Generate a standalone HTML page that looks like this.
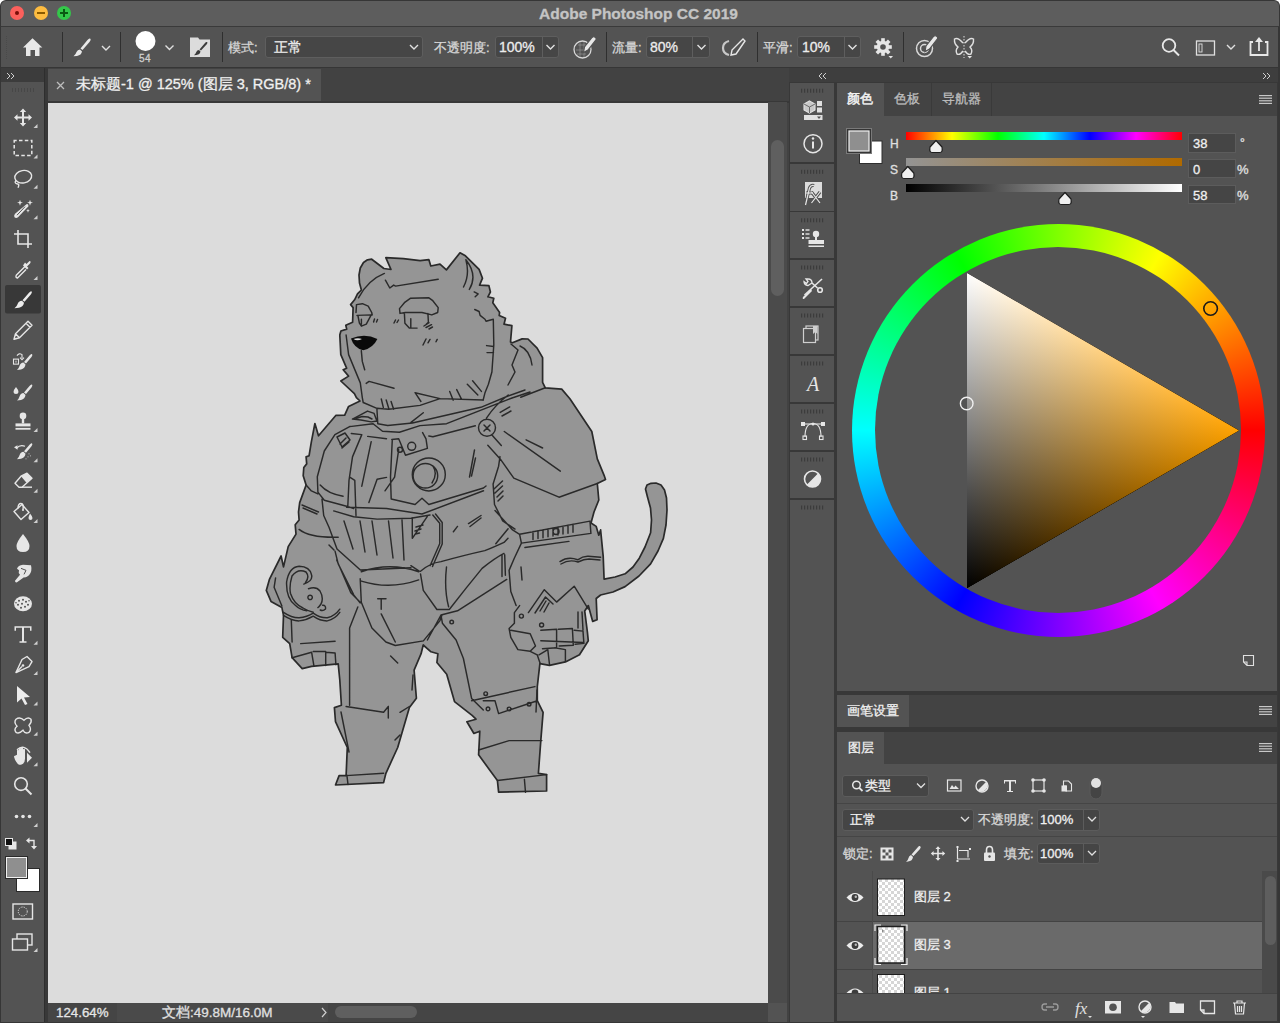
<!DOCTYPE html>
<html><head><meta charset="utf-8">
<style>
*{margin:0;padding:0;box-sizing:border-box}
html,body{width:1280px;height:1023px;overflow:hidden;background:#282828;font-family:"Liberation Sans",sans-serif;color:#e6e6e6}
.a{position:absolute}
.t{position:absolute;white-space:nowrap;line-height:1;-webkit-text-stroke:0.3px currentColor}
svg{position:absolute;overflow:visible}
</style></head><body>
<!-- title bar -->
<div class="a" style="left:0;top:0;width:1280px;height:27px;background:#ffffff"></div><div class="a" style="left:0;top:0;width:1280px;height:27px;background:#5d5d5d;border:1px solid #363636;border-bottom:1px solid #3a3a3a;border-radius:6px 6px 0 0"></div>
<div class="a" style="left:10px;top:6px;width:14px;height:14px;border-radius:50%;background:#fc605c"></div>
<div class="a" style="left:34px;top:6px;width:14px;height:14px;border-radius:50%;background:#fdbc40"></div>
<div class="a" style="left:57px;top:6px;width:14px;height:14px;border-radius:50%;background:#34c84a"></div>
<div class="t" style="left:0;width:1277px;text-align:center;top:6px;font-size:15.5px;font-weight:bold;color:#c4c4c4">Adobe Photoshop CC 2019</div>
<!-- options bar -->
<div class="a" style="left:0;top:27px;width:1280px;height:41px;background:#535353;border-bottom:1px solid #363636"></div>

<!-- traffic symbols -->
<div class="a" style="left:15px;top:11px;width:4px;height:4px;border-radius:50%;background:#7a0c08"></div>
<div class="a" style="left:37px;top:12px;width:8px;height:2px;background:#8a5a00"></div>
<div class="a" style="left:60px;top:12px;width:8px;height:2px;background:#0a5a12"></div>
<div class="a" style="left:63px;top:9px;width:2px;height:8px;background:#0a5a12"></div>
<!-- options bar content -->
<div class="a" style="left:6px;top:36px;width:2px;height:23px;border-left:1px dotted #4a4a4a"></div>
<svg style="left:0;top:0;z-index:2" width="1280" height="68">
 <g fill="#e8e8e8">
  <path d="M32.5 38.3 L42.3 47.5 L39.5 47.5 L39.5 56 L35 56 L35 50 L30.5 50 L30.5 56 L26 56 L26 47.5 L23 47.5 Z"/>
 </g>
 <g stroke="#2f2f2f" stroke-width="1"><line x1="62.5" y1="32" x2="62.5" y2="62"/><line x1="120.5" y1="32" x2="120.5" y2="62"/><line x1="222.5" y1="32" x2="222.5" y2="62"/><line x1="606.5" y1="32" x2="606.5" y2="62"/><line x1="757.5" y1="32" x2="757.5" y2="62"/><line x1="903.5" y1="32" x2="903.5" y2="62"/></g>
 <!-- brush -->
 <path d="M90 38.5 Q91.5 39.5 89.5 42 L82.5 50 L80.5 48.5 L87.5 40 Q89 38 90 38.5 Z M80 49.5 L82 51.5 Q81.5 55 77 56 L73.5 56.3 Q76 54 76.5 52 Q77.5 49.5 80 49.5 Z" fill="#e8e8e8"/>
 <g fill="none" stroke="#e0e0e0" stroke-width="1.4">
  <polyline points="102,46 106,50 110,46"/>
  <polyline points="165.5,45.5 169.5,49.5 173.5,45.5"/>
  <polyline points="410,45 414,49 418,45"/>
  <polyline points="546.5,45 550.5,49 554.5,45"/>
  <polyline points="697.5,45 701.5,49 705.5,45"/>
  <polyline points="848.5,45 852.5,49 856.5,45"/>
  <polyline points="1227,45 1231,49 1235,45"/>
 </g>
 <circle cx="145.5" cy="41" r="10" fill="#ffffff"/>
 <!-- brush panel toggle -->
 <path d="M190 37.5 L198 37.5 L199.5 39.5 L210 39.5 L210 57 L190 57 Z" fill="#dcdcdc"/>
 <path d="M207 42 Q208 42.5 207 44 L201 50.5 L199.5 49.5 L205 43 Q206 41.5 207 42 Z M199 50 L200.5 51.5 Q200 54.5 196.5 55 L194 55.2 Q196 53.5 196.3 52 Q197 50 199 50 Z" fill="#3c3c3c"/>
 <!-- pressure opacity icon -->
 <g fill="none" stroke="#d8d8d8" stroke-width="1.3">
  <circle cx="582.5" cy="49.5" r="8.5"/>
  <path d="M576 50 L588 50 M578 45 L587 45 M577 54 L586 54 M580 42 L580 57 M584 42 L584 57" stroke-width="0.6" stroke="#9a9a9a"/>
 </g>
 <path d="M583.5 52.5 L584.5 47 L592 37.5 Q593.5 36 595.5 37.5 Q597 39 595.5 40.5 L588 50 Z" fill="#e8e8e8" stroke="#535353" stroke-width="1.2"/>
 <!-- airbrush -->
 <path d="M729 41 Q723 42.5 723 48 Q723 53.5 729 55" fill="none" stroke="#c8c8c8" stroke-width="2.2"/>
 <path d="M743 39 L745 41 L736 54 L731 55 L732 50 Z" fill="none" stroke="#e6e6e6" stroke-width="1.4"/>
 <!-- gear -->
 <g transform="translate(883,47)">
  <circle r="6.2" fill="#e6e6e6"/>
  <g fill="#e6e6e6"><rect x="-1.8" y="-8.8" width="3.6" height="17.6"/><rect x="-1.8" y="-8.8" width="3.6" height="17.6" transform="rotate(45)"/><rect x="-1.8" y="-8.8" width="3.6" height="17.6" transform="rotate(90)"/><rect x="-1.8" y="-8.8" width="3.6" height="17.6" transform="rotate(135)"/></g>
  <circle r="2.8" fill="#535353"/>
 </g>
 <path d="M888.5 56 L893 56 L890.75 58.5 Z" fill="#e6e6e6"/>
 <!-- target pressure size -->
 <g fill="none" stroke="#d8d8d8" stroke-width="1.5">
  <circle cx="924.5" cy="48.5" r="8"/>
  <circle cx="924.5" cy="48.5" r="4"/>
 </g>
 <path d="M925 51.5 L926 46 L933.5 36.5 Q935 35 937 36.5 Q938.5 38 937 39.5 L929.5 49 Z" fill="#e8e8e8" stroke="#535353" stroke-width="1.2"/>
 <!-- butterfly -->
 <g fill="none" stroke="#e0e0e0" stroke-width="1.4">
  <path d="M963 43 Q958 37 954.5 39 Q954 44 958 47 Q955 50 957 54 Q960 55.5 963 51"/>
  <path d="M965 43 Q970 37 973.5 39 Q974 44 970 47 Q973 50 971 54 Q968 55.5 965 51"/>
 </g>
 <line x1="964" y1="36" x2="964" y2="58" stroke="#e0e0e0" stroke-width="1" stroke-dasharray="1.5 1.5"/>
 <path d="M967.5 56 L972 56 L969.75 58.5 Z" fill="#e6e6e6"/>
 <!-- search -->
 <circle cx="1169" cy="45.5" r="6.3" fill="none" stroke="#e8e8e8" stroke-width="1.8"/>
 <line x1="1173.5" y1="50" x2="1179" y2="55.5" stroke="#e8e8e8" stroke-width="2"/>
 <!-- workspace -->
 <rect x="1196.5" y="41" width="18" height="14" fill="none" stroke="#e0e0e0" stroke-width="1.3"/>
 <rect x="1199" y="44" width="3" height="8" fill="none" stroke="#e0e0e0" stroke-width="0.9"/>
 <!-- share -->
 <path d="M1253 42 L1250.5 42 L1250.5 55 L1267.5 55 L1267.5 42 L1265 42" fill="none" stroke="#e8e8e8" stroke-width="1.8"/>
 <path d="M1259 51 L1259 39" stroke="#e8e8e8" stroke-width="1.8"/>
 <path d="M1255 42 L1259 37 L1263 42 Z" fill="#e8e8e8"/>
</svg>
<div class="t" style="left:139px;top:54px;font-size:10px;color:#d0d0d0;letter-spacing:0.5px">54</div>
<div class="t" style="left:228px;top:41px;font-size:13px;color:#d6d6d6">模式:</div>
<div class="a" style="left:265px;top:36px;width:158px;height:22px;background:#464646;border:1px solid #5e5e5e;border-radius:3px"></div>
<div class="t" style="left:274px;top:40px;font-size:14px;color:#ececec">正常</div>
<div class="t" style="left:434px;top:41px;font-size:13px;color:#d6d6d6">不透明度:</div>
<div class="a" style="left:495px;top:36px;width:64px;height:22px;background:#464646;border:1px solid #5e5e5e;border-radius:3px"></div>
<div class="a" style="left:542px;top:37px;width:1px;height:20px;background:#5e5e5e"></div>
<div class="t" style="left:499px;top:40px;font-size:14px;color:#ececec">100%</div>
<div class="t" style="left:612px;top:41px;font-size:13px;color:#d6d6d6">流量:</div>
<div class="a" style="left:646px;top:36px;width:64px;height:22px;background:#464646;border:1px solid #5e5e5e;border-radius:3px"></div>
<div class="a" style="left:692px;top:37px;width:1px;height:20px;background:#5e5e5e"></div>
<div class="t" style="left:650px;top:40px;font-size:14px;color:#ececec">80%</div>
<div class="t" style="left:763px;top:41px;font-size:13px;color:#d6d6d6">平滑:</div>
<div class="a" style="left:797px;top:36px;width:64px;height:22px;background:#464646;border:1px solid #5e5e5e;border-radius:3px"></div>
<div class="a" style="left:844px;top:37px;width:1px;height:20px;background:#5e5e5e"></div>
<div class="t" style="left:802px;top:40px;font-size:14px;color:#ececec">10%</div>

<!-- strip -->
<div class="a" style="left:0;top:68px;width:1280px;height:14px;background:#3f3f3f"></div>
<!-- tools panel -->
<div class="a" style="left:0;top:68px;width:45px;height:955px;background:#535353;border-right:1px solid #2e2e2e"></div>
<div class="a" style="left:0;top:68px;width:44px;height:14px;background:#3c3c3c"></div>
<!-- tools -->
<svg style="left:0;top:0;z-index:2" width="45" height="1023">
<g fill="#474747"><rect x="12" y="88" width="1" height="4"/><rect x="15" y="88" width="1" height="4"/><rect x="18" y="88" width="1" height="4"/><rect x="21" y="88" width="1" height="4"/><rect x="24" y="88" width="1" height="4"/><rect x="27" y="88" width="1" height="4"/><rect x="30" y="88" width="1" height="4"/><rect x="33" y="88" width="1" height="4"/></g>
<rect x="5" y="285" width="36" height="28.5" rx="2" fill="#383838"/>
<g transform="translate(23,117.50)"><g fill="#e6e6e6"><path d="M0 -9 L3.2 -5.5 L1 -5.5 L1 -1 L5.5 -1 L5.5 -3.2 L9 0 L5.5 3.2 L5.5 1 L1 1 L1 5.5 L3.2 5.5 L0 9 L-3.2 5.5 L-1 5.5 L-1 1 L-5.5 1 L-5.5 3.2 L-9 0 L-5.5 -3.2 L-5.5 -1 L-1 -1 L-1 -5.5 L-3.2 -5.5 Z"/></g></g>
<path d="M37.5 124.00 L37.5 128.00 L33.5 128.00 Z" fill="#cfcfcf"/>
<g transform="translate(23,147.89)"><rect x="-8.8" y="-7.5" width="17.6" height="15" fill="none" stroke="#e6e6e6" stroke-width="1.5" stroke-dasharray="3.5 2.3" stroke-dashoffset="1"/></g>
<path d="M37.5 154.39 L37.5 158.39 L33.5 158.39 Z" fill="#cfcfcf"/>
<g transform="translate(23,178.28)"><g fill="none" stroke="#e6e6e6" stroke-width="1.4"><ellipse cx="0.5" cy="-1.5" rx="8.5" ry="6.2" transform="rotate(-10)"/><path d="M-7 2 Q-9 5 -6 5.5 Q-3 5.5 -5 9.5"/></g></g>
<path d="M37.5 184.78 L37.5 188.78 L33.5 188.78 Z" fill="#cfcfcf"/>
<g transform="translate(23,208.67)"><g fill="#e6e6e6"><path d="M3.5 -4.5 Q5.5 -5 5.5 -2.5 L-5 8.5 Q-7 10 -8.5 8.5 Q-9.5 7 -8 5 Z"/><path d="M-3 -9 L-2.2 -6.6 L0 -6 L-2.2 -5.4 L-3 -3 L-3.8 -5.4 L-6 -6 L-3.8 -6.6 Z"/><path d="M7 -9 L7.8 -6.6 L10 -6 L7.8 -5.4 L7 -3 L6.2 -5.4 L4 -6 L6.2 -6.6 Z"/><path d="M5 0 L5.6 1.6 L7 2 L5.6 2.4 L5 4 L4.4 2.4 L3 2 L4.4 1.6 Z"/></g><path d="M2 -2 L-6 6.5" stroke="#535353" stroke-width="1" fill="none"/></g>
<path d="M37.5 215.17 L37.5 219.17 L33.5 219.17 Z" fill="#cfcfcf"/>
<g transform="translate(23,239.06)"><g fill="none" stroke="#e6e6e6" stroke-width="1.6"><path d="M-5 -9 L-5 5 L9 5"/><path d="M-9 -5 L5 -5 L5 9"/></g></g>
<g transform="translate(23,269.45)"><g fill="none" stroke="#e6e6e6" stroke-width="1.4"><path d="M2 -3 L-6.5 5.5 Q-8 8 -5.5 8.5 L3 0"/></g><g fill="#e6e6e6"><path d="M0 -4 L4 0 L5.5 -1.5 L4 -3 L7 -6 Q8.5 -8.5 6.5 -8.5 L3.5 -5.5 L2 -7 Z"/></g></g>
<path d="M37.5 275.95 L37.5 279.95 L33.5 279.95 Z" fill="#cfcfcf"/>
<g transform="translate(23,299.84)"><g fill="#ececec"><path d="M8.5 -8.5 Q9.5 -7.5 8 -5.5 L1.5 2 L-0.5 0.5 L6 -7 Q7.5 -9 8.5 -8.5 Z"/><path d="M-1 1 L1 3 Q0.5 7 -4 8 L-8.5 8.5 Q-6 6.5 -5.5 4.5 Q-4.5 1 -1 1 Z"/></g></g>
<g transform="translate(23,330.23)"><g fill="none" stroke="#e6e6e6" stroke-width="1.4" stroke-linejoin="round"><path d="M5 -9 L9 -5 L-3.5 7.5 L-9 9 L-7.5 3.5 Z M3 -7 L7 -3 M-7.5 3.5 L-3.5 7.5"/></g></g>
<g transform="translate(23,360.62)"><g fill="#e6e6e6"><path d="M9 -6.5 Q10 -5.5 8.5 -3.5 L3 3 L1 1.5 L6.5 -5 Q8 -7 9 -6.5 Z"/><path d="M0.5 2 L2.5 4 Q2 8 -2 9 L-6 9.5 Q-4 7.5 -3.5 5.5 Q-2.5 2 0.5 2 Z"/></g><rect x="-9.5" y="-1.5" width="5" height="5" fill="none" stroke="#e6e6e6" stroke-width="1.1"/><rect x="-8" y="0" width="2" height="2" fill="#9a9a9a"/><path d="M-6 -5 Q-4 -8 -1 -6 L-1 -2.5" fill="none" stroke="#e6e6e6" stroke-width="1.1"/><path d="M-3 -3 L-1 -1 L1 -3" fill="none" stroke="#e6e6e6" stroke-width="1.1"/></g>
<g transform="translate(23,391.01)"><g fill="#e6e6e6"><path d="M9 -6.5 Q10 -5.5 8.5 -3.5 L3 3 L1 1.5 L6.5 -5 Q8 -7 9 -6.5 Z"/><path d="M0.5 2 L2.5 4 Q2 8 -2 9 L-6 9.5 Q-4 7.5 -3.5 5.5 Q-2.5 2 0.5 2 Z"/><path d="M-7 -4 Q-4.5 -1 -4.5 1 Q-4.5 3 -7 3 Q-9.5 3 -9.5 1 Q-9.5 -1 -7 -4 Z"/></g></g>
<g transform="translate(23,421.40)"><g fill="#e6e6e6"><circle cx="0" cy="-5.5" r="3.3"/><rect x="-1.2" y="-3" width="2.4" height="5"/><path d="M-7.5 2 L7.5 2 L7.5 5 L-7.5 5 Z"/><rect x="-7.5" y="6.5" width="15" height="1.8"/></g></g>
<path d="M37.5 427.90 L37.5 431.90 L33.5 431.90 Z" fill="#cfcfcf"/>
<g transform="translate(23,451.79)"><g fill="#e6e6e6"><path d="M9 -8.5 Q10 -7.5 8.5 -5.5 L3 1 L1 -0.5 L6.5 -7 Q8 -9 9 -8.5 Z"/><path d="M0.5 0 L2.5 2 Q2 6 -2 7 L-6 7.5 Q-4 5.5 -3.5 3.5 Q-2.5 0 0.5 0 Z"/></g><path d="M2 -5.5 Q-3 -7.5 -6.5 -3.5" fill="none" stroke="#e6e6e6" stroke-width="1.2"/><path d="M-9 -4.5 L-5.5 -6.5 L-5.5 -2 Z" fill="#e6e6e6"/><g fill="#bbbbbb"><circle cx="6" cy="2" r="0.6"/><circle cx="5" cy="5" r="0.6"/><circle cx="7.5" cy="4" r="0.6"/><circle cx="3" cy="7" r="0.6"/></g></g>
<path d="M37.5 458.29 L37.5 462.29 L33.5 462.29 Z" fill="#cfcfcf"/>
<g transform="translate(23,482.18)"><g fill="none" stroke="#e6e6e6" stroke-width="1.4" stroke-linejoin="round"><path d="M-2 -6 L4 -9 L9 -4 L-1 5 L-4 5 L-8 1 Z"/><path d="M-1 5 L9 5"/></g><path d="M-2 -6 L4 -9 L9 -4 L3.5 0.5 Z" fill="#e6e6e6"/></g>
<path d="M37.5 488.68 L37.5 492.68 L33.5 492.68 Z" fill="#cfcfcf"/>
<g transform="translate(23,512.57)"><g fill="none" stroke="#e6e6e6" stroke-width="1.4" stroke-linejoin="round"><path d="M-9 -1 L-1 -8 L6 0 L-2 7 Z"/><path d="M-5 -4 Q-5 -9 -2 -9 Q1 -9 0 -3"/></g><circle cx="0" cy="-2.5" r="1" fill="#e6e6e6"/><path d="M7 1 Q9.5 4 9.5 5.5 Q9.5 7.5 7.5 7.5 Q5.5 7.5 5.5 5.5 Q5.5 4 7 1 Z" fill="#e6e6e6"/></g>
<path d="M37.5 519.07 L37.5 523.07 L33.5 523.07 Z" fill="#cfcfcf"/>
<g transform="translate(23,542.96)"><path d="M0 -9 Q6.5 -1 6.5 3 Q6.5 9 0 9 Q-6.5 9 -6.5 3 Q-6.5 -1 0 -9 Z" fill="#e6e6e6"/></g>
<g transform="translate(23,573.35)"><path d="M8 -8 Q9.5 -2 6 2 Q3.5 4.5 1 4 L-6 9 Q-8 9.5 -8 7.5 L-3 1.5 Q-5 -0.5 -4 -3 L-6 -4.5 Q-5 -8 0 -8.5 Z" fill="#e6e6e6"/><path d="M-2 -5 L3 -3 L1 1" fill="none" stroke="#535353" stroke-width="1"/></g>
<g transform="translate(23,603.74)"><ellipse cx="0" cy="0" rx="9" ry="7.5" fill="#e6e6e6"/><g fill="#535353"><circle cx="-4" cy="-3" r="1"/><circle cx="0" cy="-4" r="1"/><circle cx="3" cy="-2" r="1"/><circle cx="-5" cy="1" r="1"/><circle cx="-1" cy="0" r="1"/><circle cx="5" cy="1" r="1"/><circle cx="-2" cy="4" r="1"/><circle cx="2" cy="3" r="1"/><circle cx="6" cy="-3" r="0.8"/><circle cx="-7" cy="-1" r="0.8"/></g></g>
<g transform="translate(23,634.13)"><g fill="#e6e6e6"><path d="M-8.5 -8 L8.5 -8 L8.5 -3.5 L7 -3.5 L7 -6.3 L1 -6.3 L1 7 L3.5 7 L3.5 8.5 L-3.5 8.5 L-3.5 7 L-1 7 L-1 -6.3 L-7 -6.3 L-7 -3.5 L-8.5 -3.5 Z"/></g></g>
<path d="M37.5 640.63 L37.5 644.63 L33.5 644.63 Z" fill="#cfcfcf"/>
<g transform="translate(23,664.52)"><g fill="none" stroke="#e6e6e6" stroke-width="1.4" stroke-linejoin="round"><path d="M4 -8 L9 -3 L6 2 L-7 8 L-1 -5 Z"/><path d="M-7 8 L-1 2"/></g><circle cx="0" cy="1" r="1.3" fill="#e6e6e6"/></g>
<path d="M37.5 671.02 L37.5 675.02 L33.5 675.02 Z" fill="#cfcfcf"/>
<g transform="translate(23,694.91)"><path d="M-6 -9 L7 2 L1 2.5 L4.5 9 L2 10 L-1.5 3.5 L-6 7.5 Z" fill="#ececec"/></g>
<path d="M37.5 701.41 L37.5 705.41 L33.5 705.41 Z" fill="#cfcfcf"/>
<g transform="translate(23,725.30)"><path d="M-7 -6 Q-3 -9 1 -5 Q5 -9 8 -6 Q9 -3 6 0 Q9 4 6 7 Q2 9 0 5 Q-4 9 -7 7 Q-9.5 4 -6 1 Q-9.5 -3 -7 -6 Z" fill="none" stroke="#e6e6e6" stroke-width="1.4"/></g>
<path d="M37.5 731.80 L37.5 735.80 L33.5 735.80 Z" fill="#cfcfcf"/>
<g transform="translate(23,755.69)"><g fill="#e6e6e6"><path d="M-6 -1 L-6 -5 Q-6 -6 -5 -6 Q-4 -6 -4 -5 L-4 -1 L-4 -7 Q-4 -8 -3 -8 Q-2 -8 -2 -7 L-2 -1 L-2 -7.5 Q-2 -8.5 -1 -8.5 Q0 -8.5 0 -7.5 L0 -1 L0 -6 Q0 -7 1 -7 Q2 -7 2 -6 L2 3 Q2 8 -2 9 L-4 9 Q-6 8 -8 4 L-9 1 Q-9 0 -8 0 Z"/><path d="M4 -3 L9 2 L4 7 Z"/></g><path d="M-6 -6 Q1 -12 7 -3" fill="none" stroke="#e6e6e6" stroke-width="1.4"/></g>
<path d="M37.5 762.19 L37.5 766.19 L33.5 766.19 Z" fill="#cfcfcf"/>
<g transform="translate(23,786.08)"><circle cx="-2" cy="-2" r="6.3" fill="none" stroke="#e6e6e6" stroke-width="1.6"/><line x1="2.5" y1="2.5" x2="8.5" y2="8.5" stroke="#e6e6e6" stroke-width="2"/></g>
<g transform="translate(23,816.47)"><g fill="#e6e6e6"><circle cx="-6.5" cy="0" r="1.8"/><circle cx="0" cy="0" r="1.8"/><circle cx="6.5" cy="0" r="1.8"/></g></g>
<path d="M37.5 822.97 L37.5 826.97 L33.5 826.97 Z" fill="#cfcfcf"/>
<rect x="9" y="842" width="7" height="7" fill="#e6e6e6" stroke="#e6e6e6" stroke-width="1"/><rect x="5.5" y="838.5" width="7" height="7" fill="#111" stroke="#e6e6e6" stroke-width="1"/>
<path d="M28.5 840.5 L34 840.5 L34 847" fill="none" stroke="#e6e6e6" stroke-width="1.4"/><path d="M29.5 837.5 L26 840.5 L29.5 843.5 Z M31 846 L34 849.5 L37 846 Z" fill="#e6e6e6"/>
<rect x="16.5" y="868.5" width="23" height="23" fill="#ffffff" stroke="#2a2a2a" stroke-width="1"/>
<rect x="5.5" y="856.5" width="22" height="22" fill="#8f8f8f" stroke="#2a2a2a" stroke-width="1"/><rect x="6.5" y="857.5" width="20" height="20" fill="none" stroke="#f0f0f0" stroke-width="1"/>
<rect x="13" y="904" width="19.5" height="15" fill="none" stroke="#e6e6e6" stroke-width="1.4"/><circle cx="22.75" cy="911.5" r="4.5" fill="none" stroke="#e6e6e6" stroke-width="1" stroke-dasharray="1.2 1.2"/>
<rect x="17" y="934" width="15" height="11" fill="#535353" stroke="#e6e6e6" stroke-width="1.4"/><rect x="12.5" y="939" width="15" height="11" fill="#535353" stroke="#e6e6e6" stroke-width="1.4"/><path d="M37.5 948 L37.5 952 L33.5 952 Z" fill="#cfcfcf"/>
</svg>
<!-- doc area -->
<div class="a" style="left:45px;top:68px;width:744px;height:955px;background:#424242"></div>
<div class="a" style="left:45px;top:68px;width:3px;height:955px;background:#383838"></div>
<div class="a" style="left:48px;top:69px;width:273px;height:32px;background:#535353"></div>
<svg style="left:0;top:0" width="100" height="100"><path d="M57 82 L64 89 M64 82 L57 89" stroke="#bdbdbd" stroke-width="1.3"/></svg>
<div class="t" style="left:76px;top:77px;font-size:14.5px;color:#f0f0f0">未标题-1 @ 125% (图层 3, RGB/8) *</div>
<div class="a" style="left:48px;top:101px;width:741px;height:1.5px;background:#383838"></div>
<div class="a" style="left:48px;top:102.5px;width:720px;height:900.5px;background:#dcdcdc"></div>
<div class="a" style="left:768px;top:102px;width:19px;height:901px;background:#4b4b4b"></div><div class="a" style="left:768px;top:1003px;width:19px;height:19px;background:#535353"></div>
<div class="a" style="left:771px;top:140px;width:13px;height:156px;border-radius:6.5px;background:#5f5f5f"></div>
<div class="a" style="left:48px;top:1003px;width:720px;height:20px;background:#454545"></div>
<div class="a" style="left:117px;top:1003px;width:211px;height:20px;background:#4a4a4a"></div>
<div class="t" style="left:56px;top:1006px;font-size:13.3px;color:#e6e6e6">124.64%</div>
<div class="t" style="left:162px;top:1006px;font-size:13.5px;color:#e0e0e0">文档:49.8M/16.0M</div>
<svg style="left:0;top:0" width="340" height="1023"><path d="M322 1008 L326 1012.5 L322 1017" fill="none" stroke="#d0d0d0" stroke-width="1.2"/></svg>
<div class="a" style="left:335px;top:1006px;width:82px;height:12px;border-radius:6px;background:#5f5f5f"></div>
<!-- CHAR -->
<svg style="left:0;top:0;z-index:1" width="768" height="1002"><path d="M361.4 290.0 L359.5 283.0 L359.0 275.0 L360.3 268.0 L363.5 262.5 L367.5 259.8 L371.7 259.2 L383.9 268.5 L391.0 269.5 L385.8 257.7 L403.4 258.7 L420.1 260.6 L428.9 259.7 L430.8 266.0 L440.0 264.1 L446.4 269.9 L460.0 252.8 L465.4 255.8 L479.1 269.4 L482.5 278.2 L479.6 285.1 L488.9 285.6 L490.4 292.0 L487.9 296.8 L493.8 298.3 L492.8 302.7 L499.6 312.5 L499.2 315.4 L505.5 318.3 L504.0 324.2 L511.9 325.7 L510.5 342.0 L512.4 342.8 L522.1 338.9 L528.0 339.0 L537.1 348.1 L542.6 357.7 L542.6 382.3 L545.3 387.8 L561.7 389.1 L569.9 398.7 L591.8 431.5 L597.3 458.9 L604.1 475.3 L605.5 479.4 L597.3 483.5 L598.8 500.0 L594.0 512.0 L591.0 523.0 L596.2 526.4 L598.8 535.2 L600.6 529.9 L603.2 556.3 L604.1 579.2 L615.0 577.0 L625.1 573.8 L633.0 567.0 L639.3 558.2 L645.0 547.0 L650.6 532.7 L651.5 520.0 L650.5 508.0 L647.5 497.0 L645.5 489.0 L647.0 485.0 L651.0 483.3 L656.0 483.0 L661.0 485.0 L664.5 490.0 L666.5 498.0 L667.0 510.0 L666.0 525.0 L663.4 538.4 L658.0 551.0 L650.6 563.9 L639.0 576.0 L625.1 586.6 L613.0 592.0 L600.6 595.0 L596.2 598.5 L597.1 619.7 L592.7 621.4 L588.3 605.6 L584.7 610.9 L587.4 632.0 L588.3 640.8 L579.5 654.8 L565.4 661.9 L549.5 665.4 L539.9 663.6 L537.3 686.6 L537.3 700.7 L543.1 712.4 L540.8 740.6 L538.4 773.4 L546.6 774.6 L546.6 791.0 L498.6 792.2 L497.4 780.5 L490.4 771.1 L478.6 754.7 L479.8 731.2 L473.9 733.5 L466.9 721.8 L476.0 719.2 L472.1 715.3 L454.5 701.6 L446.7 674.3 L436.9 662.5 L437.9 653.7 L431.0 651.8 L423.2 645.0 L421.1 653.7 L414.1 670.2 L416.4 698.3 L409.4 707.6 L397.7 747.5 L385.9 773.3 L383.6 782.6 L335.5 785.0 L339.1 775.6 L346.1 775.6 L347.3 747.5 L335.5 721.7 L334.4 707.6 L341.4 705.3 L339.8 680.0 L338.2 663.9 L311.6 666.3 L302.2 668.6 L292.1 657.7 L289.7 643.6 L282.7 637.3 L283.5 615.4 L281.9 607.6 L271.0 601.4 L266.3 590.4 L269.4 579.4 L281.1 556.0 L283.5 566.9 L288.2 546.6 L296.0 534.1 L295.2 524.7 L299.1 520.0 L298.5 512.0 L299.7 502.6 L306.1 485.1 L303.2 475.7 L303.8 467.5 L306.7 463.9 L306.1 456.9 L309.1 455.7 L311.4 441.7 L314.9 423.5 L318.5 435.8 L336.0 415.3 L344.7 415.2 L348.6 406.4 L360.0 401.0 L356.4 397.6 L354.4 393.7 L340.8 381.0 L348.6 376.1 L343.2 369.7 L346.6 368.2 L340.8 354.6 L339.8 335.0 L340.9 331.0 L346.7 329.1 L345.8 325.2 L352.6 322.2 L353.1 307.6 L350.6 304.6 L354.6 299.8 L357.5 293.9 L358.5 292.9 Z" fill="#959595" stroke="#2a2a2a" stroke-width="1.7" stroke-linejoin="round"/><path d="M358.5 297.8 Q368 280 384.4 273.4 M385.4 280.2 L389.8 288.0 L393.7 285.1 L395.6 286.1 L438.2 279.2 M465.9 259.7 Q470 275 463.5 287 M465.9 259.7 Q478 275 469.3 289.5 M474.2 291.9 L478.1 293.9 L475.2 296.8 M474.7 309.5 L479.1 311.5 L480.1 315.4 L485.0 319.3 L486.0 321.3 L493.3 319.3 L493.8 345.0 L491.9 372.0 L488.4 384.3 L484.9 393.1 L483.1 400.2 M486.6 345.6 L493.7 346.5 M487.0 352.6 L493.5 352.6 M356.0 312.5 L356.5 304.6 L362.4 303.7 L368.2 306.1 L371.7 312.5 L372.2 314.9 M357.0 315.4 L371.2 314.9 L366.3 324.2 L361.4 326.2 L359.4 323.2 L358.0 316.0 M361.4 319.3 L361.4 324.2 M373.6 322.0 L374.5 319.0 M376.5 322.0 L377.5 319.5 M394.0 323.0 L395.5 320.0 M397.0 322.5 L398.5 320.0 M400.0 313.4 L399.5 308.6 L404.4 302.7 L410.3 298.3 L428.9 297.8 L432.8 300.7 L438.2 307.6 L437.7 312.5 L431.8 314.9 L422.0 312.5 L405.4 312.5 L400.0 313.4 M404.4 313.4 L404.9 323.2 L409.3 328.1 L417.1 328.1 M410.8 318.8 L410.8 328.1 M427.9 313.4 L428.4 322.2 L426.5 324.0 M424.0 326.0 L429.0 322.7 M426.0 327.5 L431.5 324.7 M429.0 329.0 L432.5 327.0 M423.0 345.0 L426.0 339.0 M428.0 342.8 L430.0 339.4 M436.0 341.8 L437.2 339.4 M361.3 350.6 L362.3 361.4 L364.7 369.7 M346.1 335.0 L348.6 354.6 L360.3 382.9 L362.3 397.6 L363.2 402.5 M366.2 383.4 L369.1 381.4 L394.0 388.3 M363.2 402.5 L376.9 408.3 L388.7 409.3 L420.0 405.4 L440.0 398.6 L483.0 400.0 M415.1 392.7 L440.0 398.6 M415.1 392.7 L420.9 401.5 M381.3 399.0 L383.3 407.4 M386.2 400.0 L388.7 408.3 M391.1 401.5 L393.6 409.3 M449.7 391.4 L453.2 400.2 M456.7 389.6 L461.1 398.4 M467.3 384.3 L477.8 394.9 M472.6 380.8 L481.4 391.4 M511.0 344.0 L518.0 350.0 L512.0 365.0 L515.0 372.0 L508.0 385.0 M520 346 Q530 350 532 365 M376.9 408.7 L377.8 423.7 L387.7 425.5 L412.4 423.0 L480.8 407.3 L508.0 396.0 L525.0 390.0 M349.7 426.6 L373.1 423.7 L382.5 431.2 L399.4 432.2 L420.0 425.6 L446.6 423.7 L512.0 398.0 L530.0 392.0 M411.0 422.4 L423.3 412.8 M352.5 419.1 L367.5 411.1 L374.1 413.4 L376.9 421.0 L371.2 421.9 L360.9 420.0 L352.5 419.1 M356.0 418.5 L362.0 416.5 L368.0 417.0 L372.0 419.0 M350.1 426.4 L334.9 434.6 L324.3 451.0 L317.3 476.8 L317.9 492.1 L324.3 500.3 L346.6 506.2 L353.6 508.5 M306.1 485.1 L311.4 490.9 L317.9 493.9 M320.2 485.1 Q328 494 343.1 496.2 M351.3 433.5 L361.8 434.6 L352.5 456.9 L349.0 480.4 L347.8 506.2 M371.2 441.7 L361.8 486.2 M367.7 436.4 L386.5 438.7 M337.0 437.0 L345.0 433.0 L350.0 440.0 L342.0 447.0 L337.0 437.0 M340.0 444.0 L346.0 438.0 M342.0 448.0 L349.0 442.0 M392.3 439.5 L390.5 477.1 L391.2 499.0 L415.1 504.5 L422.0 498.3 L428.8 504.5 L483.5 488.0 L486.0 486.0 M391.8 439.5 L398.7 438.8 L405.5 455.2 L427.4 448.4 L426.0 438.8 L422.6 432.6 M428.8 436.0 L432.9 436.7 L475.3 425.8 M398.7 449.7 L394.6 477.1 L385.0 490.8 M350.1 477.4 L354.8 480.4 L356.0 515.5 M368.9 502.6 L377.1 479.2 L386.5 477.4 M346.6 507.3 L386.5 508.5 L422.0 514.0 L483.5 490.8 M333.7 510.9 L353.6 516.7 L377.1 519.1 L411.0 518.2 L430.0 515.0 M402.5 449.7 A2.5 2.5 0 1 1 397.5 449.7 A2.5 2.5 0 1 1 402.5 449.7 M415.7 446.3 A4 4 0 1 1 407.7 446.3 A4 4 0 1 1 415.7 446.3 M445.3 474.4 A16.5 16.5 0 1 1 412.3 474.4 A16.5 16.5 0 1 1 445.3 474.4 M437.7 475.7 A12.3 12.3 0 1 1 413.1 475.7 A12.3 12.3 0 1 1 437.7 475.7 M433 466 Q438 474 432 483 M495.5 427.8 A8.5 8.5 0 1 1 478.5 427.8 A8.5 8.5 0 1 1 495.5 427.8 M484.0 425.0 L490.0 431.0 M490.0 425.0 L484.0 431.0 M486.3 418.3 Q495 405 508.2 395 M491.7 434.7 L501.3 445.6 M487.8 445.2 L500.2 458.9 L513.8 478.1 L559.0 497.2 L597.3 483.5 M504.3 431.5 L560.3 471.2 M526.1 439.8 L542.6 448.0 M500.2 412.4 L509.7 406.9 M502.0 416.0 L511.0 411.0 M520.7 397.3 L545.3 387.8 M500.0 456.6 L498.6 466.2 L493.1 484.0 L494.5 504.5 L502.7 520.9 L515.0 529.1 M494.0 489.0 L502.5 481.0 M495.0 493.0 L502.5 486.0 M497.0 497.0 L503.0 491.0 M498.0 501.0 L503.0 496.0 M469.5 477.0 L474.5 450.0 M471.5 476.0 L475.5 458.0 M468.5 523.6 L481.0 515.5 M470.0 526.5 L481.0 518.0 M453.4 531.8 L457.5 526.4 M302.0 505.0 L318.5 512.0 M303.0 508.0 L317.0 514.0 M322.0 499.1 L323.7 515.5 L329.0 527.3 L337.0 549.0 L360.4 570.0 M344.0 521.0 L353.0 549.0 M360.0 521.0 L365.0 552.0 M372.0 521.0 L377.0 555.0 M388.5 521.0 L393.0 558.0 M402.0 520.0 L404.0 560.0 M360.4 570.0 L411.0 567.7 M412.3 518.0 L412.3 538.3 L427.4 516.4 M415.0 531.0 L421.0 529.0 M415.5 534.0 L419.5 533.0 M416.0 527.0 L423.0 525.0 M432.8 515.0 L439.7 523.3 L439.7 543.8 L430.1 565.7 M435.5 514.0 L442.2 522.5 L442.2 544.0 L432.5 566.5 M420.5 571.2 Q430 563 441 561.6 Q465 555 484.8 550.6 Q497 546 504 542.4 L508 538.3 M410.9 565.7 L419.2 571.2 M420.5 573.9 L423.3 590.3 L436.9 609.5 L449.3 609.5 M449.3 609.5 Q466 588 482.1 568.4 Q495 558 504 553.4 M441.0 615.0 L457.5 610.8 L506.7 579.4 M446.5 567 Q444 589 448.6 606.7 M441.0 615.0 L442.4 623.2 L447.9 630.0 L456.1 640.0 L463.4 658.5 L471.6 698.4 L483.3 710.1 M441.0 615.0 L427.4 640.0 M502.0 554.7 L502.0 576.6 M504.7 554.7 L505.4 575.3 M495.8 543.8 L508.1 528.7 M471.6 700.7 L534.9 686.6 M483.3 700.7 L495.0 700.7 L498.6 713.6 L537.3 700.7 M453.5 622.1 A1.8 1.8 0 1 1 449.9 622.1 A1.8 1.8 0 1 1 453.5 622.1 M487.5 693.7 A1.8 1.8 0 1 1 483.9 693.7 A1.8 1.8 0 1 1 487.5 693.7 M489.8 708.9 A1.8 1.8 0 1 1 486.2 708.9 A1.8 1.8 0 1 1 489.8 708.9 M510.9 708.9 A1.8 1.8 0 1 1 507.3 708.9 A1.8 1.8 0 1 1 510.9 708.9 M530.9 704.2 A1.8 1.8 0 1 1 527.3 704.2 A1.8 1.8 0 1 1 530.9 704.2 M478.6 750.0 L509.1 740.6 L541.9 740.6 M497.4 780.5 L546.6 774.6 M524.4 779.3 L525.5 792.2 M537.0 690.0 L536.0 712.0 M361.3 571.7 Q390 562 418.7 571.7 M361.3 581.1 Q390 590 418.7 579.9 M360.2 578.8 L361.3 602.2 L371.9 628.0 L385.9 642.0 L395.3 645.5 L423.4 640.9 L439.8 620.9 L442.0 615.0 M381.2 613.9 L395.3 642.0 M377.7 598.7 L386.0 598.7 M381.2 598.7 L381.2 609.2 M336.7 560.0 L350.8 592.8 L360.2 602.2 M390.6 656.0 L397.7 663.0 M357.8 606.9 L349.6 628.0 L349.6 705.3 M346.1 706.5 L383.6 712.3 L388.3 706.5 M388.3 706.5 L388.3 718.0 M400.0 712.3 L409.4 706.5 M346.1 775.6 L383.6 773.3 M346.9 775.2 L348.0 784.5 M341.0 712.0 L349.0 752.0 M413.0 675.0 L412.0 690.0 M395.0 740.0 L400.0 735.0 M299.1 529.4 Q310 538 338.2 537.2 M275.6 577.9 L274.1 587.3 L281.9 606.0 M303.8 584.1 Q313 581 311.6 575 Q310 566.5 299.1 566.2 Q289 567 286.6 582 Q286 598 295 605 Q300 610 306.9 610.7 M305.4 582.6 Q310 577 306 572 Q298 568 292 576 Q289 586 290.5 593.5 Q294 604 303 608 Q308 611 313.2 612.3 M308.5 588.8 Q316 586 320 591 Q324 598 321 604 Q319 607 317.9 607.6 M312.3 597.4 A2.2 2.2 0 1 1 307.9 597.4 A2.2 2.2 0 1 1 312.3 597.4 M322.6 605.3 Q326 605 325.5 609 Q323 611.5 320.2 610 M283.5 612.3 Q292 618 299.1 617.8 Q307 617 313.2 613.1 Q320 618 327.3 617.8 Q335 616 339.8 609.2 M283.5 615.4 Q292 621 299.1 620.9 Q307 620 313.2 616.2 Q320 621 327.3 620.9 Q335 619 339.8 612.3 M291.3 620.1 L292.1 642.0 M300.7 643.6 L335.1 641.2 M292.1 657.7 L311.6 652.2 L314.0 666.3 M313.2 651.4 L325.7 651.4 L325.7 665.5 M325.7 652.2 L335.1 653.0 L335.9 664.7 M335.1 551.3 L338.2 563.8 L353.9 595.1 L360.1 602.9 M329.0 545.0 L334.0 550.0 M519.6 534.3 L590.0 521.1 L590.9 533.4 L521.4 543.1 L519.6 534.3 M533.0 531.5 L533.0 539.5 M538.0 530.6 L538.0 538.6 M543.0 529.7 L543.0 537.7 M548.0 528.8 L548.0 536.8 M553.0 527.9 L553.0 535.9 M558.0 527.0 L558.0 535.0 M563.0 526.1 L563.0 534.1 M568.0 525.2 L568.0 533.2 M573.0 524.3 L573.0 532.3 M559.0 531.5 A3 3 0 1 1 553.0 531.5 A3 3 0 1 1 559.0 531.5 M495.0 510.6 L512.6 529.9 L519.6 534.3 M521.4 543.1 L514.4 558.0 L509.1 570.4 L510.8 591.5 L516.1 605.6 M524.9 547.5 L568.9 541.4 M521.0 567.0 L522.0 580.0 M560 561.6 Q568 556 577.7 559.8 Q583 556 588.3 556.3 L600.6 557.2 M561 564 Q569 559 578 562 Q584 559 589 559 L600 560 M528.4 612.6 L544.3 589.7 L556.6 602.1 L574.2 586.2 L588.3 609.1 M535.0 613.0 L545.5 597.0 L553.0 604.0 M540.0 611.0 L546.0 601.0 M544.0 612.0 L549.0 603.0 M519.6 605.6 L514.4 612.6 L514.4 623.2 L509.1 628.5 L510.8 637.3 L517.9 649.6 L530.2 651.3 L537.2 654.8 M510.8 630.2 L530.2 633.7 L535.5 646.0 L530.2 651.3 M540.8 630.2 L556.6 629.3 L556.6 647.8 L542.5 648.7 M558.3 629.3 L572.4 628.5 L573.3 645.2 L559.2 646.0 M574.2 630.2 L583.0 631.1 L583.9 643.4 L575.1 644.3 M540.8 640.8 L583.0 642.5 M539.0 654.8 L547.8 649.6 L549.5 664.5 M554.8 647.8 L565.4 649.6 L565.4 661.0 M523.4 616.1 A2 2 0 1 1 519.4 616.1 A2 2 0 1 1 523.4 616.1 M543.6 624.9 A2 2 0 1 1 539.6 624.9 A2 2 0 1 1 543.6 624.9 M578.0 612.0 L578.0 628.0 M582.0 612.0 L583.0 630.0 M537.2 654.8 L540.0 663.0" fill="none" stroke="#2a2a2a" stroke-width="1.45" stroke-linecap="round" stroke-linejoin="round"/><path d="M351 338.4 Q365 333 377.4 338.9 Q373 348 363.2 350.2 Q354 348 351 338.4 Z" fill="#0a0a0a"/><path d="M353.5 339 Q358 337.5 362 339 Q357 341.5 353.5 339 Z" fill="#d8d8d8"/></svg>
<!-- /CHAR -->
<!-- icon column -->
<div class="a" style="left:789px;top:68px;width:491px;height:14px;background:#3e3e3e"></div>
<div class="a" style="left:789px;top:82px;width:48px;height:941px;background:#383838"></div>
<div class="a" style="left:790px;top:82.7px;width:43.6px;height:79.3px;background:#535353"></div>
<div class="a" style="left:790px;top:163.8px;width:43.6px;height:47.0px;background:#535353"></div>
<div class="a" style="left:790px;top:212.3px;width:43.6px;height:45.69999999999999px;background:#535353"></div>
<div class="a" style="left:790px;top:259.5px;width:43.6px;height:46.5px;background:#535353"></div>
<div class="a" style="left:790px;top:307.5px;width:43.6px;height:46.5px;background:#535353"></div>
<div class="a" style="left:790px;top:355.5px;width:43.6px;height:46.5px;background:#535353"></div>
<div class="a" style="left:790px;top:403.5px;width:43.6px;height:46.5px;background:#535353"></div>
<div class="a" style="left:790px;top:451.5px;width:43.6px;height:46.5px;background:#535353"></div>
<div class="a" style="left:790px;top:499.5px;width:43.6px;height:523.5px;background:#535353"></div>
<svg style="left:0;top:0;z-index:2" width="1280" height="1023">
<path d="M822 73 L819 76 L822 79 M826 73 L823 76 L826 79" fill="none" stroke="#cfcfcf" stroke-width="1"/>
<path d="M1263 73 L1266 76 L1263 79 M1267 73 L1270 76 L1267 79" fill="none" stroke="#cfcfcf" stroke-width="1"/>
<path d="M7 73 L10 76 L7 79 M11 73 L14 76 L11 79" fill="none" stroke="#cfcfcf" stroke-width="1"/>
<g fill="#3c3c3c"><rect x="801" y="88.7" width="1.2" height="4"/><rect x="804" y="88.7" width="1.2" height="4"/><rect x="807" y="88.7" width="1.2" height="4"/><rect x="810" y="88.7" width="1.2" height="4"/><rect x="813" y="88.7" width="1.2" height="4"/><rect x="816" y="88.7" width="1.2" height="4"/><rect x="819" y="88.7" width="1.2" height="4"/><rect x="822" y="88.7" width="1.2" height="4"/></g>
<g fill="#3c3c3c"><rect x="801" y="169.8" width="1.2" height="4"/><rect x="804" y="169.8" width="1.2" height="4"/><rect x="807" y="169.8" width="1.2" height="4"/><rect x="810" y="169.8" width="1.2" height="4"/><rect x="813" y="169.8" width="1.2" height="4"/><rect x="816" y="169.8" width="1.2" height="4"/><rect x="819" y="169.8" width="1.2" height="4"/><rect x="822" y="169.8" width="1.2" height="4"/></g>
<g fill="#3c3c3c"><rect x="801" y="218.3" width="1.2" height="4"/><rect x="804" y="218.3" width="1.2" height="4"/><rect x="807" y="218.3" width="1.2" height="4"/><rect x="810" y="218.3" width="1.2" height="4"/><rect x="813" y="218.3" width="1.2" height="4"/><rect x="816" y="218.3" width="1.2" height="4"/><rect x="819" y="218.3" width="1.2" height="4"/><rect x="822" y="218.3" width="1.2" height="4"/></g>
<g fill="#3c3c3c"><rect x="801" y="265.5" width="1.2" height="4"/><rect x="804" y="265.5" width="1.2" height="4"/><rect x="807" y="265.5" width="1.2" height="4"/><rect x="810" y="265.5" width="1.2" height="4"/><rect x="813" y="265.5" width="1.2" height="4"/><rect x="816" y="265.5" width="1.2" height="4"/><rect x="819" y="265.5" width="1.2" height="4"/><rect x="822" y="265.5" width="1.2" height="4"/></g>
<g fill="#3c3c3c"><rect x="801" y="313.5" width="1.2" height="4"/><rect x="804" y="313.5" width="1.2" height="4"/><rect x="807" y="313.5" width="1.2" height="4"/><rect x="810" y="313.5" width="1.2" height="4"/><rect x="813" y="313.5" width="1.2" height="4"/><rect x="816" y="313.5" width="1.2" height="4"/><rect x="819" y="313.5" width="1.2" height="4"/><rect x="822" y="313.5" width="1.2" height="4"/></g>
<g fill="#3c3c3c"><rect x="801" y="361.5" width="1.2" height="4"/><rect x="804" y="361.5" width="1.2" height="4"/><rect x="807" y="361.5" width="1.2" height="4"/><rect x="810" y="361.5" width="1.2" height="4"/><rect x="813" y="361.5" width="1.2" height="4"/><rect x="816" y="361.5" width="1.2" height="4"/><rect x="819" y="361.5" width="1.2" height="4"/><rect x="822" y="361.5" width="1.2" height="4"/></g>
<g fill="#3c3c3c"><rect x="801" y="409.5" width="1.2" height="4"/><rect x="804" y="409.5" width="1.2" height="4"/><rect x="807" y="409.5" width="1.2" height="4"/><rect x="810" y="409.5" width="1.2" height="4"/><rect x="813" y="409.5" width="1.2" height="4"/><rect x="816" y="409.5" width="1.2" height="4"/><rect x="819" y="409.5" width="1.2" height="4"/><rect x="822" y="409.5" width="1.2" height="4"/></g>
<g fill="#3c3c3c"><rect x="801" y="457.5" width="1.2" height="4"/><rect x="804" y="457.5" width="1.2" height="4"/><rect x="807" y="457.5" width="1.2" height="4"/><rect x="810" y="457.5" width="1.2" height="4"/><rect x="813" y="457.5" width="1.2" height="4"/><rect x="816" y="457.5" width="1.2" height="4"/><rect x="819" y="457.5" width="1.2" height="4"/><rect x="822" y="457.5" width="1.2" height="4"/></g>
<g fill="#3c3c3c"><rect x="801" y="505.5" width="1.2" height="4"/><rect x="804" y="505.5" width="1.2" height="4"/><rect x="807" y="505.5" width="1.2" height="4"/><rect x="810" y="505.5" width="1.2" height="4"/><rect x="813" y="505.5" width="1.2" height="4"/><rect x="816" y="505.5" width="1.2" height="4"/><rect x="819" y="505.5" width="1.2" height="4"/><rect x="822" y="505.5" width="1.2" height="4"/></g>
<g stroke="#e0e0e0" stroke-width="1.1" fill="#c8c8c8"><path d="M809.5 101 L815 104 L815 110 L809.5 113 L804 110 L804 104 Z"/></g>
<path d="M804 104 L809.5 107 L815 104 M809.5 107 L809.5 113" fill="none" stroke="#6a6a6a" stroke-width="1"/>
<g fill="#e0e0e0"><rect x="817" y="101" width="5" height="5"/><rect x="817" y="107.5" width="5" height="5"/><rect x="804" y="115" width="18.5" height="5"/></g>
<path d="M817 116.5 L821 116.5 L819 119 Z" fill="#535353"/>
<circle cx="813" cy="143.7" r="9" fill="none" stroke="#e6e6e6" stroke-width="1.5"/><rect x="812" y="141.5" width="2" height="7" fill="#e6e6e6"/><circle cx="813" cy="138.5" r="1.2" fill="#e6e6e6"/>
<rect x="805" y="182" width="17" height="16" fill="#dcdcdc"/><path d="M814 185.5 Q811 184.5 809.5 188 L805.5 205" fill="none" stroke="#535353" stroke-width="3.2"/><path d="M806 193 L813 193" stroke="#535353" stroke-width="3"/><path d="M811.5 192 L820 203 M820 192 L811.5 203" stroke="#535353" stroke-width="3.2"/><path d="M814 185.5 Q811 184.5 809.5 188 L805.5 205" fill="none" stroke="#e6e6e6" stroke-width="1.2"/><path d="M806 193 L813 193" stroke="#e6e6e6" stroke-width="1.2"/><path d="M811.5 192 L820 203 M820 192 L811.5 203" stroke="#e6e6e6" stroke-width="1.2"/>
<g fill="#e6e6e6"><rect x="802" y="229" width="2" height="2"/><rect x="802" y="233" width="2" height="2"/><rect x="802" y="237" width="2" height="2"/><rect x="805.5" y="229.3" width="4" height="1.4"/><rect x="805.5" y="233.3" width="4" height="1.4"/><rect x="805.5" y="237.3" width="4" height="1.4"/>
<circle cx="816" cy="234" r="3.2"/><rect x="815" y="236" width="2" height="4"/><path d="M808.5 240 L824 240 L824 244 L808.5 244 Z"/><rect x="808.5" y="245.5" width="15.5" height="1.5"/></g>
<g stroke="#e6e6e6" fill="none" stroke-width="1.6"><path d="M822 279 L804.5 295"/><circle cx="820" cy="290" r="2.3"/><path d="M817.5 288 L812 283"/><path d="M812 283 Q812 279 808 279 L806 279 L808 281.5 L806.5 283.5 L804 281.5 Q804 285 808 285.5 Z" stroke-width="1.3"/></g><path d="M811 289 L803 297 Q802 299 804 299 L812 291 Z" fill="#e6e6e6"/>
<rect x="806" y="326" width="12" height="14" fill="none" stroke="#cfcfcf" stroke-width="1.2"/><rect x="803.5" y="328.5" width="12" height="14" fill="#535353" stroke="#cfcfcf" stroke-width="1.2"/><path d="M813 326 L817.5 326 L817.5 334 L815.25 332 L813 334 Z" fill="#cfcfcf"/>
<text x="813" y="391" text-anchor="middle" font-family="Liberation Serif" font-style="italic" font-size="20" fill="#e6e6e6">A</text>
<g fill="none" stroke="#e6e6e6" stroke-width="1.1"><path d="M805 437 Q805 423.5 813 423.5 Q821 423.5 821 437"/><path d="M803 424 L823 424"/><rect x="803" y="436" width="3.5" height="3.5"/><rect x="819.5" y="436" width="3.5" height="3.5"/></g><g fill="#e6e6e6"><rect x="801" y="422" width="4" height="4"/><rect x="821" y="422" width="4" height="4"/><circle cx="813" cy="424" r="1.5"/></g>
<circle cx="812.5" cy="479" r="8" fill="#535353" stroke="#e6e6e6" stroke-width="1.6"/><path d="M818.2 473.3 A8 8 0 0 1 806.8 484.7 Z" fill="#e6e6e6"/>
</svg>
<!-- right panels -->

<div class="a" style="left:836.8px;top:82px;width:443.2px;height:941px;background:#383838"></div>
<!-- color panel -->
<div class="a" style="left:837px;top:82.7px;width:440px;height:608.3px;background:#535353"></div>
<div class="a" style="left:884px;top:82.7px;width:393px;height:33.3px;background:#434343"></div>
<div class="a" style="left:930.5px;top:82.7px;width:1px;height:33.3px;background:#3a3a3a"></div>
<div class="a" style="left:990.5px;top:82.7px;width:1px;height:33.3px;background:#3a3a3a"></div>
<div class="t" style="left:847px;top:92px;font-size:13px;color:#f4f4f4;-webkit-text-stroke:0.45px #f4f4f4">颜色</div>
<div class="t" style="left:894px;top:92px;font-size:13px;color:#bdbdbd">色板</div>
<div class="t" style="left:942px;top:92px;font-size:13px;color:#bdbdbd">导航器</div>
<svg style="left:0;top:0;z-index:2" width="1280" height="1023">
 <g fill="#c8c8c8"><rect x="1259" y="95" width="13" height="1.2"/><rect x="1259" y="97.6" width="13" height="1.2"/><rect x="1259" y="100.2" width="13" height="1.2"/><rect x="1259" y="102.8" width="13" height="1.2"/></g>
 <g fill="#c8c8c8"><rect x="1259" y="706" width="13" height="1.2"/><rect x="1259" y="708.6" width="13" height="1.2"/><rect x="1259" y="711.2" width="13" height="1.2"/><rect x="1259" y="713.8" width="13" height="1.2"/></g>
 <g fill="#c8c8c8"><rect x="1259" y="743" width="13" height="1.2"/><rect x="1259" y="745.6" width="13" height="1.2"/><rect x="1259" y="748.2" width="13" height="1.2"/><rect x="1259" y="750.8" width="13" height="1.2"/></g>
 <!-- swatches -->
 <rect x="859.5" y="141" width="22.5" height="22.5" fill="#ffffff" stroke="#2e2e2e" stroke-width="1"/>
 <rect x="846.5" y="128.5" width="25" height="25" fill="#353535" stroke="#7a7a7a" stroke-width="1"/>
 <rect x="849" y="131" width="20" height="20" fill="#8f8f8f" stroke="#f0f0f0" stroke-width="1.2"/>
 <defs>
  <linearGradient id="hg" x1="0" x2="1" y1="0" y2="0">
   <stop offset="0" stop-color="#ff0000"/><stop offset="0.1667" stop-color="#ffff00"/><stop offset="0.3333" stop-color="#00ff00"/><stop offset="0.5" stop-color="#00ffff"/><stop offset="0.6667" stop-color="#0000ff"/><stop offset="0.8333" stop-color="#ff00ff"/><stop offset="1" stop-color="#ff0000"/>
  </linearGradient>
  <linearGradient id="sg" x1="0" x2="1"><stop offset="0" stop-color="#949494"/><stop offset="1" stop-color="#b06a00"/></linearGradient>
  <linearGradient id="bg" x1="0" x2="1"><stop offset="0" stop-color="#000000"/><stop offset="1" stop-color="#ffffff"/></linearGradient>
 </defs>
 <rect x="906" y="132" width="276" height="8" fill="url(#hg)"/>
 <rect x="906" y="158" width="276" height="8" fill="url(#sg)"/>
 <rect x="906" y="184" width="276" height="8" fill="url(#bg)"/>
 <g fill="#f0f0f0" stroke="#1e1e1e" stroke-width="1.2" stroke-linejoin="round">
  <path d="M936 140.5 L942 147 Q943 152.5 940 152.5 L932 152.5 Q929 152.5 930 147 Z"/>
  <path d="M907.8 166.5 L913.8 173 Q914.8 178.5 911.8 178.5 L903.8 178.5 Q900.8 178.5 901.8 173 Z"/>
  <path d="M1065 192.5 L1071 199 Q1072 204.5 1069 204.5 L1061 204.5 Q1058 204.5 1059 199 Z"/>
 </g>
 <!-- small icon bottom right of wheel -->
 <path d="M1243.5 655.5 L1253.5 655.5 L1253.5 665.5 L1247 665.5 L1243.5 662 Z M1243.5 662 L1247 662 L1247 665.5" fill="none" stroke="#e0e0e0" stroke-width="1.1"/>
</svg>
<div class="t" style="left:890px;top:138px;font-size:12px;color:#e0e0e0">H</div>
<div class="t" style="left:890px;top:164px;font-size:12px;color:#e0e0e0">S</div>
<div class="t" style="left:890px;top:190px;font-size:12px;color:#e0e0e0">B</div>
<div class="a" style="left:1188px;top:133px;width:48px;height:20px;background:#454545;border:1px solid #5c5c5c"></div>
<div class="a" style="left:1188px;top:159px;width:48px;height:19px;background:#454545;border:1px solid #5c5c5c"></div>
<div class="a" style="left:1188px;top:185px;width:48px;height:19px;background:#454545;border:1px solid #5c5c5c"></div>
<div class="t" style="left:1193px;top:137px;font-size:13px;color:#f0f0f0">38</div>
<div class="t" style="left:1193px;top:163px;font-size:13px;color:#f0f0f0">0</div>
<div class="t" style="left:1193px;top:189px;font-size:13px;color:#f0f0f0">58</div>
<div class="t" style="left:1240px;top:137px;font-size:12px;color:#e0e0e0">°</div>
<div class="t" style="left:1237px;top:163px;font-size:13px;color:#e0e0e0">%</div>
<div class="t" style="left:1237px;top:189px;font-size:13px;color:#e0e0e0">%</div>
<!-- wheel -->
<div class="a" style="left:851.5px;top:223.5px;width:413px;height:413px;border-radius:50%;background:conic-gradient(from 90deg,#ff0000,#ff00ff 60deg,#0000ff 120deg,#00ffff 180deg,#00ff00 240deg,#ffff00 300deg,#ff0000 360deg)"></div>
<div class="a" style="left:875px;top:247px;width:366px;height:366px;border-radius:50%;background:#535353"></div>
<svg style="left:0;top:0;z-index:2" width="1280" height="1023">
 <defs>
  <linearGradient id="tr" gradientUnits="userSpaceOnUse" x1="967" y1="588" x2="1103.6" y2="352.1"><stop offset="0" stop-color="#000"/><stop offset="1" stop-color="#f00"/></linearGradient>
  <linearGradient id="tg" gradientUnits="userSpaceOnUse" x1="967" y1="588" x2="1015.17" y2="280.55"><stop offset="0" stop-color="#000"/><stop offset="1" stop-color="#0f0"/></linearGradient>
  <linearGradient id="tb2" gradientUnits="userSpaceOnUse" x1="967" y1="588" x2="830.4" y2="352.1"><stop offset="0" stop-color="#000"/><stop offset="1" stop-color="#00f"/></linearGradient>
 </defs>
 <g style="isolation:isolate">
 <path d="M967 273 L1239 430.5 L967 588 Z" fill="#000"/>
 <path d="M967 273 L1239 430.5 L967 588 Z" fill="url(#tr)" style="mix-blend-mode:screen"/>
 <path d="M967 273 L1239 430.5 L967 588 Z" fill="url(#tg)" style="mix-blend-mode:screen"/>
 <path d="M967 273 L1239 430.5 L967 588 Z" fill="url(#tb2)" style="mix-blend-mode:screen"/>
 </g>
 <circle cx="1210.6" cy="308.5" r="6.8" fill="none" stroke="#1a1a1a" stroke-width="1.6"/>
 <circle cx="966.7" cy="403.5" r="6.3" fill="none" stroke="#f0f0f0" stroke-width="1.4"/>
</svg>
<!-- brush settings -->
<div class="a" style="left:837px;top:694.5px;width:440px;height:32.5px;background:#434343"></div>
<div class="a" style="left:837px;top:694.5px;width:72px;height:32.5px;background:#535353"></div>
<div class="t" style="left:847px;top:704px;font-size:13px;color:#f0f0f0">画笔设置</div>
<!-- layers -->
<div class="a" style="left:837px;top:731.5px;width:440px;height:289.5px;background:#535353"></div>
<div class="a" style="left:884px;top:731.5px;width:393px;height:32.5px;background:#434343"></div>
<div class="t" style="left:848px;top:741px;font-size:13px;color:#f0f0f0">图层</div>

<div class="a" style="left:842px;top:774.5px;width:87px;height:22.5px;background:#454545;border:1px solid #5c5c5c;border-radius:3px"></div>
<div class="t" style="left:865px;top:779px;font-size:13px;color:#f0f0f0">类型</div>
<div class="a" style="left:837px;top:802.5px;width:440px;height:1px;background:#454545"></div>
<div class="a" style="left:841.5px;top:808.5px;width:132px;height:22.5px;background:#454545;border:1px solid #5c5c5c;border-radius:3px"></div>
<div class="t" style="left:850px;top:813px;font-size:13px;color:#f0f0f0">正常</div>
<div class="t" style="left:978px;top:813px;font-size:13px;color:#d8d8d8">不透明度:</div>
<div class="a" style="left:1037px;top:809px;width:63px;height:22px;background:#454545;border:1px solid #5c5c5c;border-radius:3px"></div>
<div class="a" style="left:1083px;top:810px;width:1px;height:20px;background:#5c5c5c"></div>
<div class="t" style="left:1040px;top:813px;font-size:13px;color:#f0f0f0">100%</div>
<div class="a" style="left:837px;top:836px;width:440px;height:1px;background:#454545"></div>
<div class="t" style="left:843px;top:847px;font-size:13px;color:#d8d8d8">锁定:</div>
<div class="t" style="left:1004px;top:847px;font-size:13px;color:#d8d8d8">填充:</div>
<div class="a" style="left:1037px;top:843px;width:63px;height:21px;background:#454545;border:1px solid #5c5c5c;border-radius:3px"></div>
<div class="a" style="left:1083px;top:844px;width:1px;height:19px;background:#5c5c5c"></div>
<div class="t" style="left:1040px;top:847px;font-size:13px;color:#f0f0f0">100%</div>
<!-- list -->
<div class="a" style="left:837px;top:871px;width:425px;height:122px;background:#535353"></div>
<div class="a" style="left:872px;top:922px;width:390px;height:46.5px;background:#6a6a6a"></div>
<div class="a" style="left:837px;top:921px;width:425px;height:1px;background:#434343"></div>
<div class="a" style="left:837px;top:968.5px;width:425px;height:1px;background:#434343"></div>
<div class="a" style="left:871.5px;top:871px;width:1px;height:122px;background:#4a4a4a"></div>
<div class="a" style="left:1261.5px;top:871px;width:15.5px;height:122px;background:#4a4a4a"></div>
<div class="a" style="left:1264.5px;top:876px;width:11.5px;height:69px;border-radius:6px;background:#5e5e5e"></div>
<div class="t" style="left:914px;top:890px;font-size:13px;color:#f0f0f0">图层 2</div>
<div class="t" style="left:914px;top:938px;font-size:13px;color:#f0f0f0">图层 3</div>
<div class="t" style="left:914px;top:986px;font-size:13px;color:#f0f0f0">图层 1</div>
<!-- footer -->
<div class="a" style="left:837px;top:992.5px;width:440px;height:28.5px;background:#535353;border-top:1px solid #434343"></div>
<svg style="left:0;top:0;z-index:3" width="1280" height="1023">
 <defs>
  <pattern id="chk" width="6" height="6" patternUnits="userSpaceOnUse"><rect width="6" height="6" fill="#ffffff"/><rect width="3" height="3" fill="#d6d6d6"/><rect x="3" y="3" width="3" height="3" fill="#d6d6d6"/></pattern>
 </defs>
 <path d="M921 784 L925 788 L929 784" transform="translate(-4,-0.5)" fill="none" stroke="#e0e0e0" stroke-width="1.3"/>
 <circle cx="856.5" cy="785" r="3.8" fill="none" stroke="#e6e6e6" stroke-width="1.5"/><line x1="859.3" y1="787.8" x2="862.5" y2="791" stroke="#e6e6e6" stroke-width="1.8"/>
 <!-- filter icons -->
 <rect x="947.5" y="780" width="13.5" height="11" fill="none" stroke="#e6e6e6" stroke-width="1.2"/><path d="M949.5 789 L952 785 L954 787.5 L955.5 785.5 L959 789 Z" fill="#e6e6e6"/>
 <circle cx="982" cy="786" r="6" fill="none" stroke="#e6e6e6" stroke-width="1.4"/><path d="M986.2 781.8 A6 6 0 0 1 977.8 790.2 Z" fill="#e6e6e6"/>
 <path d="M1004 780 L1016 780 L1016 783.5 L1015 783.5 L1015 781.5 L1011 781.5 L1011 791 L1013 791 L1013 792 L1007 792 L1007 791 L1009 791 L1009 781.5 L1005 781.5 L1005 783.5 L1004 783.5 Z" fill="#e6e6e6"/>
 <rect x="1033" y="780" width="11" height="11" fill="none" stroke="#e6e6e6" stroke-width="1.2"/><g fill="#e6e6e6"><circle cx="1033" cy="780" r="1.8"/><circle cx="1044" cy="780" r="1.8"/><circle cx="1033" cy="791" r="1.8"/><circle cx="1044" cy="791" r="1.8"/></g>
 <path d="M1063.5 781 L1068.5 781 L1071.5 784 L1071.5 791 L1066 791 L1066 786 L1063.5 786 Z" fill="none" stroke="#e6e6e6" stroke-width="1.1"/><rect x="1061.5" y="785.5" width="5.5" height="6" fill="#e6e6e6"/>
 <rect x="1090" y="777" width="12" height="22" rx="6" fill="#444444" stroke="#5a5a5a" stroke-width="1"/><circle cx="1096" cy="783" r="5" fill="#e0e0e0"/>
 <!-- blend chevrons -->
 <path d="M961 817 L965 821 L969 817" fill="none" stroke="#e0e0e0" stroke-width="1.3"/>
 <path d="M1088 817 L1092 821 L1096 817" fill="none" stroke="#e0e0e0" stroke-width="1.3"/>
 <path d="M1088 851 L1092 855 L1096 851" fill="none" stroke="#e0e0e0" stroke-width="1.3"/>
 <!-- lock icons -->
 <rect x="880.5" y="847.5" width="13" height="13" fill="#e6e6e6"/><g fill="#535353"><rect x="882.5" y="849.5" width="3" height="3"/><rect x="888.5" y="849.5" width="3" height="3"/><rect x="885.5" y="852.5" width="3" height="3"/><rect x="882.5" y="855.5" width="3" height="3"/><rect x="888.5" y="855.5" width="3" height="3"/></g>
 <path d="M920 846 Q921.5 847 920 849 L913.5 856 L911.5 854.5 L918 847 Q919 845.5 920 846 Z M911 855 L913 857 Q912.5 861 908 861.5 L906 862 Q908 860 908.3 858.5 Q909 855.5 911 855 Z" fill="#e6e6e6"/>
 <g fill="#e6e6e6" transform="translate(938,853.5) scale(0.8)"><path d="M0 -9 L3.2 -5.5 L1 -5.5 L1 -1 L5.5 -1 L5.5 -3.2 L9 0 L5.5 3.2 L5.5 1 L1 1 L1 5.5 L3.2 5.5 L0 9 L-3.2 5.5 L-1 5.5 L-1 1 L-5.5 1 L-5.5 3.2 L-9 0 L-5.5 -3.2 L-5.5 -1 L-1 -1 L-1 -5.5 L-3.2 -5.5 Z"/></g>
 <g fill="none" stroke="#e6e6e6" stroke-width="1.2"><path d="M957.5 848 L957.5 859 L970 859 M959 850.5 L968 850.5 L968 857.5"/></g><g fill="#e6e6e6"><rect x="956.5" y="846" width="2" height="2"/><rect x="969" y="848" width="2" height="2"/><rect x="956.5" y="860" width="2" height="2"/></g>
 <rect x="984" y="852.5" width="11" height="8.5" rx="1" fill="#e6e6e6"/><path d="M986.5 853 L986.5 850 Q986.5 846.5 989.5 846.5 Q992.5 846.5 992.5 850 L992.5 853" fill="none" stroke="#e6e6e6" stroke-width="1.6"/><circle cx="989.5" cy="856.5" r="1.2" fill="#535353"/>
 <!-- eyes -->
 <g transform="translate(855,897.5)"><path d="M-8.5 0 Q0 -9 8.5 0 Q0 9 -8.5 0 Z" fill="#ececec"/><circle r="3.4" fill="#3c3c3c"/><circle r="1.2" cx="0.8" cy="-0.8" fill="#bbbbbb"/></g>
 <g transform="translate(855,945.5)"><path d="M-8.5 0 Q0 -9 8.5 0 Q0 9 -8.5 0 Z" fill="#ececec"/><circle r="3.4" fill="#3c3c3c"/><circle r="1.2" cx="0.8" cy="-0.8" fill="#bbbbbb"/></g>
 <g transform="translate(855,993)"><path d="M-8.5 0 Q0 -9 8.5 0 Q0 9 -8.5 0 Z" fill="#ececec"/><circle r="3.4" fill="#3c3c3c"/></g>
 <!-- thumbnails -->
 <rect x="877.5" y="879" width="27" height="36.5" fill="url(#chk)" stroke="#1e1e1e" stroke-width="1"/>
 <rect x="877.5" y="926.5" width="27" height="36.5" fill="url(#chk)" stroke="#1e1e1e" stroke-width="1.5"/>
 <path d="M875 931 L875 925 L881 925 M901 925 L907 925 L907 931 M875 958 L875 964.5 L881 964.5 M901 964.5 L907 964.5 L907 958" fill="none" stroke="#f0f0f0" stroke-width="1.2"/>
 <path d="M882 929 L884 931 L882 932.5 Z" fill="#888"/>
 <rect x="877.5" y="974.5" width="27" height="30" fill="url(#chk)" stroke="#1e1e1e" stroke-width="1"/>
</svg>
<div class="a" style="left:837px;top:993px;width:440px;height:28px;background:#535353;border-top:1px solid #434343;z-index:4"></div>
<svg style="left:0;top:0;z-index:5" width="1280" height="1023">
 <g fill="none" stroke="#9a9a9a" stroke-width="1.4"><path d="M1047 1004 L1044.5 1004 Q1042 1004 1042 1007 Q1042 1010 1044.5 1010 L1047 1010 M1053 1004 L1055.5 1004 Q1058 1004 1058 1007 Q1058 1010 1055.5 1010 L1053 1010 M1046 1007 L1054 1007"/></g>
 <text x="1075" y="1014" font-family="Liberation Serif" font-style="italic" font-size="17" fill="#e0e0e0">fx</text>
 <path d="M1088 1016 L1092 1016 L1090 1018 Z M1141 1016 L1145 1016 L1143 1018 Z" fill="#e0e0e0"/>
 <rect x="1105" y="1001" width="16" height="12.5" fill="#e6e6e6"/><circle cx="1113" cy="1007.25" r="3.8" fill="#535353"/>
 <circle cx="1145" cy="1007" r="6" fill="none" stroke="#e6e6e6" stroke-width="1.4"/><path d="M1149.2 1002.8 A6 6 0 0 1 1140.8 1011.2 Z" fill="#e6e6e6"/>
 <path d="M1169.5 1002 L1175 1002 L1176 1003.5 L1184 1003.5 L1184 1013 L1169.5 1013 Z" fill="#e6e6e6"/>
 <path d="M1200.5 1001 L1214.5 1001 L1214.5 1013.5 L1204 1013.5 L1200.5 1010 Z M1200.5 1010 L1204 1010 L1204 1013.5" fill="none" stroke="#e6e6e6" stroke-width="1.3"/>
 <g fill="none" stroke="#e6e6e6" stroke-width="1.2"><path d="M1233 1003 L1246 1003 M1237 1003 L1237 1001 L1242 1001 L1242 1003 M1234.5 1003 L1235.5 1014 L1243.5 1014 L1244.5 1003 M1237.5 1006 L1237.5 1012 M1239.5 1006 L1239.5 1012 M1241.5 1006 L1241.5 1012"/></g>
</svg>
<div class="a" style="left:837px;top:1021px;width:443px;height:2px;background:#383838;z-index:6"></div>


<div class="a" style="left:0;top:27px;width:1px;height:996px;background:#363636;z-index:9"></div><div class="a" style="left:1278px;top:27px;width:2px;height:996px;background:#363636;z-index:9"></div><div class="a" style="left:0;top:1021.5px;width:1280px;height:1.5px;background:#363636;z-index:9"></div>
</body></html>
